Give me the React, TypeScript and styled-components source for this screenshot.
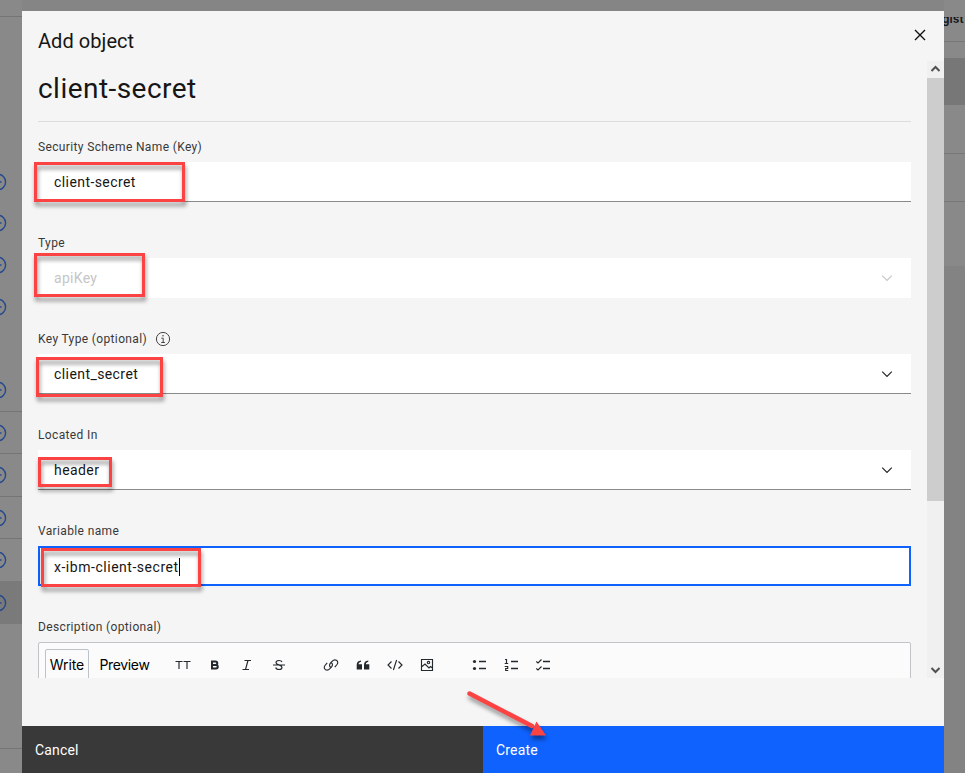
import React from "react";
import styled, { createGlobalStyle } from "styled-components";

const GlobalStyle = createGlobalStyle`
  * { box-sizing: border-box; }
  body { margin: 0; background: #858585; overflow: hidden; }
  #root { font-family: Roboto, "Noto Sans", sans-serif; color: #161616; }
`;

const Page = styled.div`
  display: grid;
  grid-template-columns: 22px 922px 21px;
  width: 965px;
  height: 773px;
  overflow: hidden;
  position: relative;
  background: #858585;
`;

const LeftStrip = styled.div`
  display: flex;
  flex-direction: column;
  height: 773px;
  overflow: hidden;
  background: #898989;
`;

const SideRow = styled.div<{ $h: number; $line?: boolean; $active?: boolean }>`
  flex: none;
  display: flex;
  align-items: center;
  height: ${(p) => p.$h}px;
  background: ${(p) => (p.$active ? "#7a7a7a" : "transparent")};
  border-bottom: ${(p) => (p.$line ? "1px solid #757575" : "0")};
  svg { display: block; margin-left: -12px; }
`;

const RightStrip = styled.div`
  display: flex;
  flex-direction: column;
  overflow: hidden;
  background: #838383;
`;

const BackRow = styled.div<{ $h: number; $bg?: string; $line?: boolean }>`
  flex: none;
  height: ${(p) => p.$h}px;
  background: ${(p) => p.$bg ?? "#898989"};
  border-bottom: ${(p) => (p.$line ? "1px solid #777" : "0")};
  overflow: hidden;
`;

const ClippedWord = styled.div`
  height: 24px;
  font: 600 12px/16px Inter, sans-serif;
  letter-spacing: 0.1px;
  color: #151515;
  overflow: hidden;
  white-space: nowrap;
  span { display: block; margin: -6px 0 0 -2px; }
`;

const Modal = styled.section`
  display: flex;
  flex-direction: column;
  margin-top: 11px;
  height: 762px;
  background: #f5f5f5;
`;

const Header = styled.header`
  display: flex;
  justify-content: space-between;
  flex: none;
  height: 50px;
  padding: 16px 17px 0 16px;
`;

const Title = styled.h3`
  margin: 0;
  font-size: 20px;
  line-height: 28px;
  font-weight: 400;
  letter-spacing: 0.06px;
`;

const CloseButton = styled.button`
  border: 0;
  padding: 0;
  background: none;
  width: 14px;
  height: 16px;
  svg { display: block; }
`;

const ScrollArea = styled.div`
  display: flex;
  flex: none;
  height: 617px;
`;

const Content = styled.div`
  width: 905px;
  padding: 8px 16px 0;
  overflow: hidden;
`;

const Heading = styled.h2`
  margin: 0;
  height: 53px;
  border-bottom: 1px solid #dcdcdc;
  font-size: 28px;
  line-height: 40px;
  font-weight: 400;
  letter-spacing: 0.46px;
`;

const Field = styled.div`
  display: flex;
  flex-direction: column;
  height: 96px;
  padding-top: 16px;
`;

const Label = styled.label`
  display: flex;
  align-items: center;
  gap: 8px;
  height: 18px;
  margin-bottom: 6px;
  font-size: 12px;
  line-height: 18px;
  letter-spacing: 0.36px;
  color: #393939;
  svg { margin-top: -1px; }
`;

const Control = styled.div<{ $disabled?: boolean; $focus?: boolean; $ls?: number }>`
  display: flex;
  align-items: center;
  justify-content: space-between;
  height: 40px;
  padding: ${(p) => (p.$focus ? "1px 14px 0" : "0 16px")};
  background: #fff;
  border: ${(p) => (p.$focus ? "2px solid #0f62fe" : "0")};
  border-bottom: ${(p) => (p.$focus ? "2px solid #0f62fe" : p.$disabled ? "0" : "1px solid #8a8a8a")};
  color: ${(p) => (p.$disabled ? "#c6c6c6" : "#161616")};
  font-size: 14px;
  line-height: 18px;
  letter-spacing: ${(p) => p.$ls ?? 0.42}px;
`;

const InputText = styled.span`
  display: flex;
  align-items: center;
`;

const Caret = styled.span`
  width: 1px;
  height: 18px;
  background: #000;
`;

const Editor = styled.div`
  display: flex;
  height: 60px;
  padding: 6px;
  background: #fbfbfb;
  border: 1px solid #c1c3c6;
  border-radius: 2px 2px 0 0;
`;

const EditorTab = styled.div<{ $active?: boolean; $w: number }>`
  width: ${(p) => p.$w}px;
  height: 50px;
  padding-top: ${(p) => (p.$active ? 6 : 7)}px;
  border: ${(p) => (p.$active ? "1px solid #bcc2c9" : "0")};
  border-radius: 2px;
  text-align: center;
  font: 400 14px/18px Inter, sans-serif;
  letter-spacing: ${(p) => (p.$active ? -0.1 : -0.35)}px;
  white-space: nowrap;
  color: #000;
`;

const Tools = styled.div<{ $first?: boolean }>`
  display: flex;
  gap: 16px;
  margin-left: ${(p) => (p.$first ? 15 : 36)}px;
  padding-top: 8px;
  svg { display: block; flex: none; }
`;

const Scrollbar = styled.div`
  display: flex;
  flex-direction: column;
  width: 17px;
  background: #f0f0f0;
`;

const ScrollArrow = styled.div`
  display: flex;
  align-items: center;
  justify-content: center;
  height: 17px;
`;

const Thumb = styled.div`
  height: 423px;
  margin-bottom: auto;
  background: #cdcdcd;
`;

const Footer = styled.footer`
  display: flex;
  margin-top: auto;
  height: 47px;
`;

const FooterButton = styled.button<{ $primary?: boolean }>`
  flex: 1;
  border: 0;
  padding: 1px 13px 0;
  text-align: left;
  font: 400 14px/18px Roboto, sans-serif;
  letter-spacing: 0.18px;
  color: #fff;
  background: ${(p) => (p.$primary ? "#0f62fe" : "#393939")};
`;

const Highlight = styled.div<{ $x: number; $y: number; $w: number; $h: number }>`
  position: absolute;
  left: ${(p) => p.$x}px;
  top: ${(p) => p.$y}px;
  width: ${(p) => p.$w}px;
  height: ${(p) => p.$h}px;
  border: 3px solid #fc4343;
  filter: drop-shadow(1px 4px 2px rgba(0, 0, 0, 0.42));
`;

const ArrowLayer = styled.svg`
  position: absolute;
  left: 460px;
  top: 685px;
  filter: drop-shadow(1px 4px 2px rgba(0, 0, 0, 0.4));
`;

const MinusCircle = () => (
  <svg width="19" height="18" viewBox="0 0 19 18" fill="none" stroke="#23488f" strokeWidth="1.4">
    <circle cx="9.8" cy="9" r="7.8" />
    <path d="M6 9h7.5" />
  </svg>
);

const Chevron = ({ color = "#222" }: { color?: string }) => (
  <svg width="16" height="16" viewBox="0 0 16 16" fill="none" stroke={color} strokeWidth="1.15">
    <path d="M3.2 5.7 8 10.5l4.8-4.8" />
  </svg>
);

const InfoIcon = () => (
  <svg width="16" height="16" viewBox="0 0 16 16" fill="none" stroke="#444" strokeWidth="1">
    <circle cx="8" cy="8" r="6.6" />
    <path d="M6.3 7.2h1.9v4M6.2 11.5h3.7" />
    <circle cx="8" cy="4.8" r=".8" fill="#444" stroke="none" />
  </svg>
);

const Icon = ({ children }: { children: React.ReactNode }) => (
  <svg width="16" height="16" viewBox="0 0 16 16" fill="none" stroke="#24292e" strokeWidth="1.15">
    {children}
  </svg>
);

const sideRows: { h: number; icon?: boolean; line?: boolean; active?: boolean }[] = [
  { h: 17, line: true },
  { h: 144 },
  { h: 42, icon: true },
  { h: 40, icon: true },
  { h: 44, icon: true },
  { h: 40, icon: true },
  { h: 42 },
  { h: 43, icon: true, line: true },
  { h: 42, icon: true, line: true },
  { h: 43, icon: true, line: true },
  { h: 42, icon: true, line: true },
  { h: 42, icon: true },
  { h: 43, icon: true, active: true },
  { h: 125, line: true },
];

const highlights = [
  [34, 162, 151, 40],
  [34, 253, 111, 44],
  [36, 357, 127, 40],
  [38, 457, 74, 30],
  [41, 548, 160, 39],
];

export default function App() {
  return (
    <Page>
      <GlobalStyle />
      <LeftStrip>
        {sideRows.map((r, i) => (
          <SideRow key={i} $h={r.h} $line={r.line} $active={r.active}>
            {r.icon && <MinusCircle />}
          </SideRow>
        ))}
      </LeftStrip>

      <Modal>
        <Header>
          <Title>Add object</Title>
          <CloseButton aria-label="Close">
            <svg width="14" height="16" viewBox="0 0 14 16" fill="none" stroke="#111" strokeWidth="1.4">
              <path d="m2 3 10 10M12 3 2 13" />
            </svg>
          </CloseButton>
        </Header>
        <ScrollArea>
          <Content>
            <Heading>client-secret</Heading>
            <Field>
              <Label>Security Scheme Name (Key)</Label>
              <Control>client-secret</Control>
            </Field>
            <Field>
              <Label>Type</Label>
              <Control $disabled $ls={0.3}>apiKey<Chevron color="#c6c6c6" /></Control>
            </Field>
            <Field>
              <Label>Key Type (optional) <InfoIcon /></Label>
              <Control>client_secret<Chevron /></Control>
            </Field>
            <Field>
              <Label>Located In</Label>
              <Control>header<Chevron /></Control>
            </Field>
            <Field>
              <Label>Variable name</Label>
              <Control $focus $ls={0.53}><InputText>x-ibm-client-secret<Caret /></InputText></Control>
            </Field>
            <Field>
              <Label>Description (optional)</Label>
              <Editor>
                <EditorTab $active $w={44}>Write</EditorTab>
                <EditorTab $w={71}>Preview</EditorTab>
                <Tools $first>
                  <Icon><path d="M.5 4.500h7M4 4.500V12M8.500 4.500h7M12 4.500V12" /></Icon>
                  <Icon><path strokeWidth="2" d="M5 4.500h3.500a1.700 1.700 0 0 1 0 3.500H5zM5 8h4a1.700 1.700 0 0 1 0 3.500H5z" /></Icon>
                  <Icon><path d="M5.500 3.500H12M3.500 12.500H10M9 3.500l-2.500 9" /></Icon>
                  <Icon><path d="M11 5c-.4-1-1.400-1.500-3-1.500C6 3.500 5 4.500 5 5.700 5 8 11 7.700 11 10.200c0 1.500-1.200 2.300-3 2.300S5 11.700 4.700 10.500M2 8h12" /></Icon>
                </Tools>
                <Tools>
                  <Icon>
                    <path d="M8.300 10.500C6.500 10 6 8.300 7.100 6.700l2-2.300c1.200-1.300 2.900-1.800 4.300-1.100 1.700 1 1.700 2.800.6 4.200l-2.200 2.600" />
                    <path d="M7.700 5.500C9.500 6 10 7.700 8.900 9.300l-2 2.300c-1.200 1.300-2.900 1.800-4.300 1.100C.9 11.700.9 9.900 2 8.500l2.200-2.600" />
                  </Icon>
                  <Icon><path fill="#24292e" stroke="none" d="M6 3.500v1.300C4.300 5.200 3.700 6 3.600 7.200H7v5.300H1.700V8C1.700 5.300 3 3.700 6 3.500zM13.300 3.500v1.300C11.600 5.200 11 6 10.900 7.200h3.400v5.300H9V8c0-2.700 1.300-4.300 4.300-4.500z" /></Icon>
                  <Icon><path d="M4.500 4.500 1 8l3.500 3.500M11.500 4.500 15 8l-3.500 3.500M9.600 3 6.400 13" /></Icon>
                  <Icon>
                    <path d="M2.500 2.500h11v11h-11zM3 9.500l3-2.500 4 4 1.500-1.500 2 1.500" />
                    <circle cx="9.500" cy="5.500" r="1.200" />
                  </Icon>
                </Tools>
                <Tools>
                  <Icon>
                    <path strokeWidth="1.300" d="M8 4.500h7M8 11.500h7" />
                    <circle cx="3.500" cy="4.500" r="1.600" fill="#24292e" stroke="none" />
                    <circle cx="3.500" cy="11.500" r="1.600" fill="#24292e" stroke="none" />
                  </Icon>
                  <Icon>
                    <path strokeWidth="1.300" d="M8 4.500h7M8 11.500h7" />
                    <path d="M2 2.500h1.500v4M1.700 6.500h3.500M1.700 9.500h3v2h-2v2h2.500" />
                  </Icon>
                  <Icon>
                    <path strokeWidth="1.300" d="M8 4.500h7M8 11.500h7" />
                    <path d="M1.300 4.500 3 6l3.500-3.500M1.300 11.500 3 13l3.500-3.500" />
                  </Icon>
                </Tools>
              </Editor>
            </Field>
          </Content>
          <Scrollbar>
            <ScrollArrow>
              <svg width="11" height="9" viewBox="0 0 11 9" fill="none" stroke="#505050" strokeWidth="2"><path d="m1.500 6 4-4 4 4" /></svg>
            </ScrollArrow>
            <Thumb />
            <ScrollArrow>
              <svg width="11" height="9" viewBox="0 0 11 9" fill="none" stroke="#505050" strokeWidth="2"><path d="m1.500 3 4 4 4-4" /></svg>
            </ScrollArrow>
          </Scrollbar>
        </ScrollArea>
        <Footer>
          <FooterButton>Cancel</FooterButton>
          <FooterButton $primary>Create</FooterButton>
        </Footer>
      </Modal>

      <RightStrip>
        <BackRow $h={17} />
        <BackRow $h={25} $line><ClippedWord><span>gist</span></ClippedWord></BackRow>
        <BackRow $h={16} />
        <BackRow $h={47} $bg="#777" />
        <BackRow $h={49} $line />
        <BackRow $h={48} $line />
        <BackRow $h={64} />
      </RightStrip>

      {highlights.map(([x, y, w, h]) => (
        <Highlight key={y} $x={x} $y={y} $w={w} $h={h} />
      ))}
      <ArrowLayer width="95" height="60" viewBox="0 0 95 60">
        <path d="M9.500 8.500 72 41" stroke="#fc4343" strokeWidth="4.500" strokeLinecap="round" />
        <path d="M86 50.500 70 50.500 76.500 36.500z" fill="#fc4343" />
      </ArrowLayer>
    </Page>
  );
}
